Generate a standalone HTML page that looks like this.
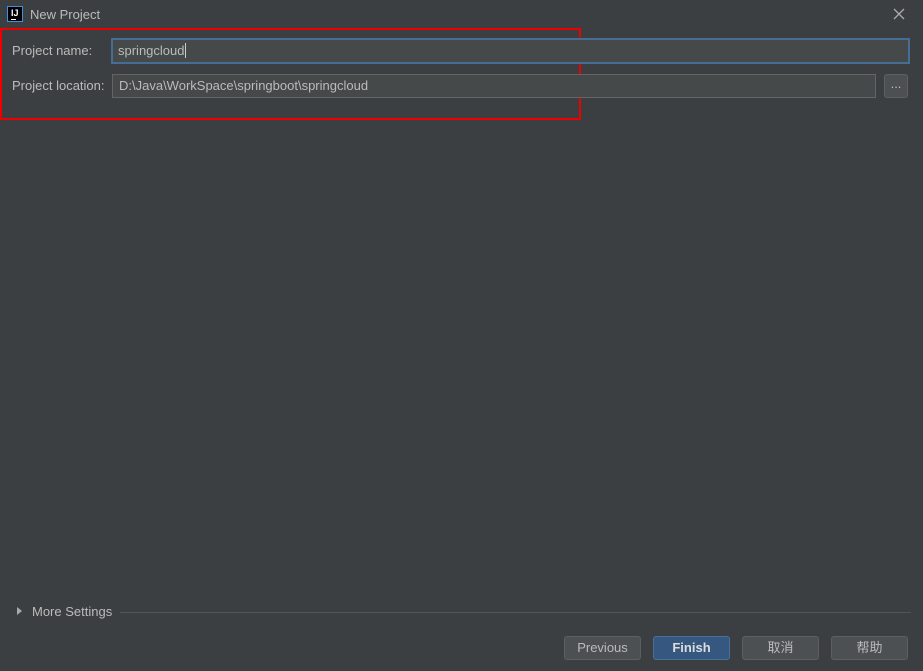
<!DOCTYPE html><html><head><style>
body{margin:0;width:923px;height:671px;background:#3c3f41;font-family:"Liberation Sans","Noto Sans CJK SC",sans-serif;font-size:13px;color:#bbbbbb;position:relative;overflow:hidden}
.a{position:absolute}
.f{position:absolute;background:#45494a;border:1px solid #646464;box-sizing:border-box;padding-left:6px;line-height:22px;color:#bbb}
.b{position:absolute;top:636px;width:77px;height:24px;box-sizing:border-box;border:1px solid #5e6060;border-radius:3px;background:#4c5052;text-align:center;line-height:22px;color:#bbb}
</style></head><body>
<div class="a" style="left:7px;top:6px;width:16px;height:16px;background:#000;border:1px solid #3d8fe0;box-sizing:border-box"><div style="color:#fff;font-size:9px;font-weight:bold;line-height:9px;margin:2px 0 0 3px">IJ</div><div style="position:absolute;left:3px;top:12px;width:5px;height:1px;background:#fff"></div></div>
<div class="a" style="left:30px;top:7px">New Project</div>
<svg class="a" style="left:893px;top:8px" width="12" height="12"><path d="M1 1L11 11M11 1L1 11" stroke="#aaa" stroke-width="1.3"/></svg>
<div class="a" style="left:0;top:28px;width:581px;height:92px;border:2px solid #e00;box-sizing:border-box"></div>
<div class="a" style="left:12px;top:43px">Project name:</div>
<div class="f" style="left:111px;top:38px;width:799px;height:26px;border:2px solid #466d94;padding-left:5px">springcloud<span style="display:inline-block;width:1px;height:15px;background:#ccc;vertical-align:-3px"></span></div>
<div class="a" style="left:12px;top:78px">Project location:</div>
<div class="f" style="left:112px;top:74px;width:764px;height:24px">D:\Java\WorkSpace\springboot\springcloud</div>
<div class="b" style="left:884px;top:74px;width:24px;line-height:18px">...</div>
<svg class="a" style="left:16px;top:606px" width="8" height="10"><path d="M1 1L6 5L1 9Z" fill="#aaa"/></svg>
<div class="a" style="left:32px;top:604px">More Settings</div>
<div class="a" style="left:120px;top:612px;width:791px;height:1px;background:#555"></div>
<div class="b" style="left:564px">Previous</div>
<div class="b" style="left:653px;background:#365880;border-color:#4a6f9a;font-weight:bold;color:#ddd">Finish</div>
<div class="b" style="left:742px">取消</div>
<div class="b" style="left:831px">帮助</div>
</body></html>
